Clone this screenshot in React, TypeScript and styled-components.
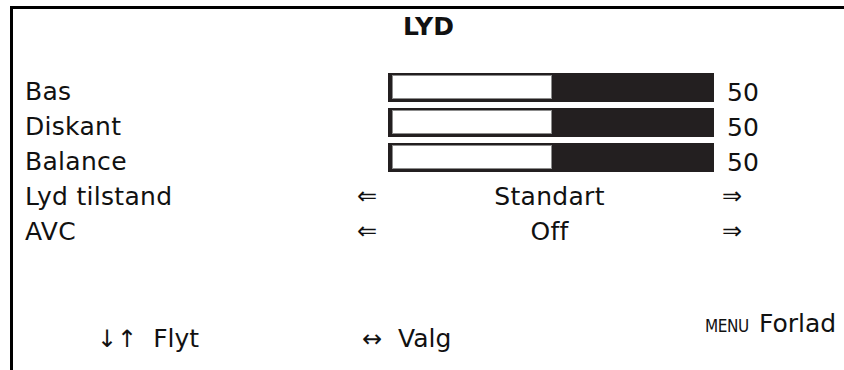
import { createGlobalStyle } from 'styled-components';
import styled from 'styled-components';

const GlobalStyle = createGlobalStyle`
  html, body {
    margin: 0;
    padding: 0;
    background: #ffffff;
  }
  body {
    font-family: "DejaVu Sans", Verdana, sans-serif;
    color: #111111;
  }
`;

// the OSD frame: only a top and left rule, open to the right and bottom
const Frame = styled.div`
  margin: 6px 0 0 10px;
  height: calc(100vh - 6px);
  box-sizing: border-box;
  border-top: 3px solid #000;
  border-left: 3px solid #000;
  display: flex;
  flex-direction: column;
`;

const Title = styled.h1`
  margin: 0;
  font-size: 25px;
  font-weight: bold;
  line-height: 35px;
  text-align: center;
`;

const Rows = styled.div`
  margin-top: 29px;
  padding-left: 12px;
  display: flex;
  flex-direction: column;
`;

const Row = styled.div`
  display: flex;
  align-items: flex-start;
  height: 35px;
`;

const Label = styled.div`
  width: 332px;
  font-size: 25px;
  line-height: 37px;
  letter-spacing: 0.3px;
  white-space: nowrap;
`;

const SliderGroup = styled.div`
  display: flex;
  align-items: flex-start;
  padding-left: 31px;
`;

const Bar = styled.div`
  width: 326px;
  height: 29px;
  box-sizing: border-box;
  padding: 2px 3px 3px 4px;
  background: #231f20;
`;

const Fill = styled.div`
  height: 100%;
  box-sizing: border-box;
  background: #ffffff;
  border: 1px solid #8c8c8c;
`;

const Value = styled.div`
  margin-left: 13px;
  font-size: 25px;
  line-height: 39px;
`;

const ChoiceGroup = styled.div`
  width: 385px;
  display: flex;
  justify-content: space-between;
  font-size: 25px;
  line-height: 37px;
  letter-spacing: 0.3px;
`;

const Arrow = styled.span`
  font-size: 24px;
  letter-spacing: 0;
`;

const Footer = styled.div`
  margin-top: auto;
  padding: 0 0 13px 84px;
  display: grid;
  grid-template-columns: 265px 343px auto;
  align-items: end;
  font-size: 25px;
  line-height: 35px;
`;

const Hint = styled.div<{ $raised?: boolean }>`
  display: flex;
  align-items: baseline;
  gap: ${({ $raised }) => ($raised ? '10px' : '16px')};
  margin-bottom: ${({ $raised }) => ($raised ? '13px' : '0')};
  white-space: nowrap;
`;

const Key = styled.span<{ $small?: boolean }>`
  font-family: ${({ $small }) =>
    $small ? '"DejaVu Sans Condensed", "Liberation Sans Narrow", "DejaVu Sans", sans-serif' : 'inherit'};
  font-stretch: ${({ $small }) => ($small ? 'condensed' : 'normal')};
  font-size: ${({ $small }) => ($small ? '17px' : '24px')};
  letter-spacing: ${({ $small }) => ($small ? '-0.4px' : '0')};
`;

const sliders = [
  { label: 'Bas', value: 50 },
  { label: 'Diskant', value: 50 },
  { label: 'Balance', value: 50 },
];

const choices = [
  { label: 'Lyd tilstand', value: 'Standart' },
  { label: 'AVC', value: 'Off' },
];

export default function App() {
  return (
    <>
      <GlobalStyle />
      <Frame>
        <Title>LYD</Title>
        <Rows>
          {sliders.map((s) => (
            <Row key={s.label}>
              <Label>{s.label}</Label>
              <SliderGroup>
                <Bar>
                  <Fill style={{ width: `${s.value}%` }} />
                </Bar>
                <Value>{s.value}</Value>
              </SliderGroup>
            </Row>
          ))}
          {choices.map((c) => (
            <Row key={c.label}>
              <Label>{c.label}</Label>
              <ChoiceGroup>
                <Arrow>⇐</Arrow>
                <span>{c.value}</span>
                <Arrow>⇒</Arrow>
              </ChoiceGroup>
            </Row>
          ))}
        </Rows>
        <Footer>
          <Hint>
            <Key>↓↑</Key>
            <span>Flyt</span>
          </Hint>
          <Hint>
            <Key>↔</Key>
            <span>Valg</span>
          </Hint>
          <Hint $raised>
            <Key $small>MENU</Key>
            <span>Forlad</span>
          </Hint>
        </Footer>
      </Frame>
    </>
  );
}
